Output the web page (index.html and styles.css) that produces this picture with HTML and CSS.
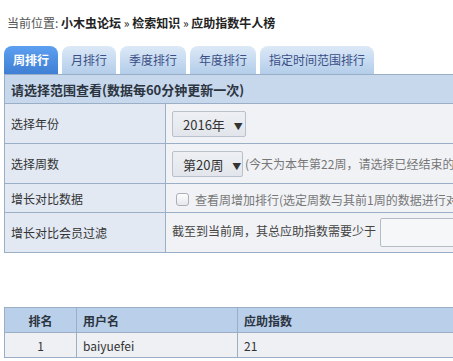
FILE: index.html
```html
<!DOCTYPE html>
<html lang="zh-CN">
<head>
  <meta charset="UTF-8">
  <title>应助指数牛人榜</title>
  <link rel="stylesheet" href="styles.css">
</head>
<body>
  <div class="page">
    <div class="crumb">
      <span class="crumb-label">当前位置:</span>
      <b>小木虫论坛</b> » <b>检索知识</b> » <b>应助指数牛人榜</b>
    </div>

    <ul class="tabs">
      <li class="tab active">周排行</li>
      <li class="tab">月排行</li>
      <li class="tab">季度排行</li>
      <li class="tab">年度排行</li>
      <li class="tab">指定时间范围排行</li>
    </ul>

    <table class="filter">
      <tr>
        <th colspan="2" class="filter-head">请选择范围查看(数据每60分钟更新一次)</th>
      </tr>
      <tr class="tall">
        <td class="label">选择年份</td>
        <td class="value">
          <span class="select">2016年 <i>▼</i></span>
        </td>
      </tr>
      <tr class="tall">
        <td class="label">选择周数</td>
        <td class="value">
          <span class="select narrow">第20周 <i>▼</i></span><span class="hint">(今天为本年第22周，请选择已经结束的周数)</span>
        </td>
      </tr>
      <tr>
        <td class="label">增长对比数据</td>
        <td class="value">
          <span class="check"></span><span class="hint">查看周增加排行(选定周数与其前1周的数据进行对比)</span>
        </td>
      </tr>
      <tr class="tall">
        <td class="label">增长对比会员过滤</td>
        <td class="value">
          截至到当前周，其总应助指数需要少于 <span class="input"></span>
        </td>
      </tr>
    </table>

    <table class="ranking">
      <tr>
        <th class="rank">排名</th>
        <th class="user">用户名</th>
        <th>应助指数</th>
      </tr>
      <tr>
        <td class="rank">1</td>
        <td class="user">baiyuefei</td>
        <td>21</td>
      </tr>
    </table>
  </div>
</body>
</html>
```

FILE: styles.css
```css
body {
  margin: 0;
  font-family: "Noto Sans CJK SC", "Microsoft YaHei", sans-serif;
  font-size: 12px;
  color: #333;
  background: #fff;
  overflow: hidden;
}
.page {
  width: 600px;
  padding: 0 4px;
}
.crumb {
  padding: 14px 3px 0;
  height: 18px;
  line-height: 18px;
  color: #222;
}
.crumb-label {
  color: #555;
}
.crumb b {
  color: #222;
}
.tabs {
  list-style: none;
  margin: 14px 0 0;
  padding: 0;
  display: flex;
  gap: 4px;
  height: 28px;
}
.tab {
  padding: 0 9px;
  line-height: 28px;
  height: 28px;
  border-radius: 8px 8px 0 0;
  background: linear-gradient(#dce9f7, #b3cdea);
  color: #3b4f86;
  font-size: 12px;
}
.tab.active {
  background: linear-gradient(#5d9ff0, #3f7fd4);
  color: #fff;
  font-weight: bold;
}
.filter {
  width: 560px;
  border-collapse: collapse;
  border: 1px solid #8ea4bd;
}
.filter td, .filter th {
  border: 1px solid #9aafc6;
  padding: 0 6px;
  text-align: left;
}
.filter-head {
  background: #c7d8ec;
  height: 25px;
  font-size: 13px;
  font-weight: bold;
  color: #2c3440;
}
.filter tr {
  height: 29px;
}
.filter tr.tall {
  height: 40px;
}
.label {
  width: 148px;
  background: #e2e9f3;
  color: #333;
}
.value {
  background: #f0f2f6;
  color: #444;
}
.select {
  display: inline-block;
  vertical-align: middle;
  width: 74px;
  height: 26px;
  line-height: 26px;
  box-sizing: border-box;
  padding-left: 10px;
  border: 1px solid #b9c1cc;
  border-radius: 2px;
  background: linear-gradient(#eef0f3, #e2e6ec);
  font-size: 13px;
  color: #333;
}
.select.narrow {
  width: 71px;
}
.select i {
  font-style: normal;
  font-size: 9px;
  margin-left: 6px;
}
.hint {
  color: #777;
  vertical-align: middle;
  margin-left: 2px;
}
.check {
  display: inline-block;
  vertical-align: middle;
  width: 11px;
  height: 11px;
  margin: 0 4px 0 4px;
  border: 1px solid #a8b0ba;
  border-radius: 3px;
  background: linear-gradient(#fdfdfd, #e6e8eb);
}
.input {
  display: inline-block;
  vertical-align: middle;
  width: 120px;
  height: 27px;
  margin-left: 1px;
  border: 1px solid #b4bcc6;
  border-radius: 2px;
  background: #f6f7f9;
}
.ranking {
  margin-top: 54px;
  width: 560px;
  border-collapse: collapse;
  border: 1px solid #8ea4bd;
}
.ranking th, .ranking td {
  border: 1px solid #9aafc6;
  height: 24px;
  padding: 0 6px;
  text-align: left;
}
.ranking th {
  background: #b9cfea;
  font-weight: bold;
  color: #2c3440;
}
.ranking td {
  background: #eef0f4;
}
.ranking .rank {
  width: 59px;
  text-align: center;
}
.ranking .user {
  width: 148px;
}
```
